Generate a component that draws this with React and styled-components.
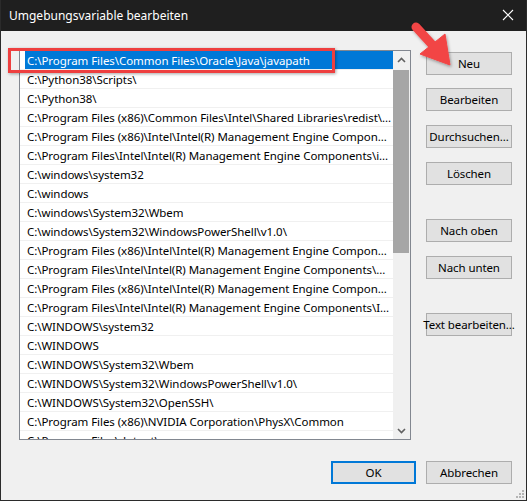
import React from 'react';
import styled, { createGlobalStyle } from 'styled-components';

const GlobalStyle = createGlobalStyle`
  html, body {
    margin: 0;
    padding: 0;
    background: #f0f0f0;
  }
  * { box-sizing: border-box; }
`;

const paths = [
  'C:\\Program Files\\Common Files\\Oracle\\Java\\javapath',
  'C:\\Python38\\Scripts\\',
  'C:\\Python38\\',
  'C:\\Program Files (x86)\\Common Files\\Intel\\Shared Libraries\\redist\\...',
  'C:\\Program Files (x86)\\Intel\\Intel(R) Management Engine Compon...',
  'C:\\Program Files\\Intel\\Intel(R) Management Engine Components\\i...',
  'C:\\windows\\system32',
  'C:\\windows',
  'C:\\windows\\System32\\Wbem',
  'C:\\windows\\System32\\WindowsPowerShell\\v1.0\\',
  'C:\\Program Files (x86)\\Intel\\Intel(R) Management Engine Compon...',
  'C:\\Program Files\\Intel\\Intel(R) Management Engine Components\\...',
  'C:\\Program Files (x86)\\Intel\\Intel(R) Management Engine Compon...',
  'C:\\Program Files\\Intel\\Intel(R) Management Engine Components\\I...',
  'C:\\WINDOWS\\system32',
  'C:\\WINDOWS',
  'C:\\WINDOWS\\System32\\Wbem',
  'C:\\WINDOWS\\System32\\WindowsPowerShell\\v1.0\\',
  'C:\\WINDOWS\\System32\\OpenSSH\\',
  'C:\\Program Files (x86)\\NVIDIA Corporation\\PhysX\\Common',
  'C:\\Program Files\\dotnet\\',
];

const sideButtons = [
  { label: 'Neu', top: 2 },
  { label: 'Bearbeiten', top: 13 },
  { label: 'Durchsuchen...', top: 14 },
  { label: 'Löschen', top: 14 },
  { label: 'Nach oben', top: 34 },
  { label: 'Nach unten', top: 14 },
  { label: 'Text bearbeiten...', top: 34 },
];

function App() {
  return (
    <>
      <GlobalStyle />
      <Window>
        <TitleBar>
          <Title>Umgebungsvariable bearbeiten</Title>
          <CloseIcon width="12" height="12" viewBox="0 0 12 12">
            <path d="M1 1 L11 11 M11 1 L1 11" stroke="#fff" strokeWidth="1.1" />
          </CloseIcon>
        </TitleBar>

        <Body>
          <Main>
            <ListBox>
              <Rows>
                {paths.map((p, i) => (
                  <Row key={i}>
                    <RowText selected={i === 0}>{p}</RowText>
                  </Row>
                ))}
              </Rows>
              <ScrollBar>
                <ScrollArrow>
                  <svg width="9" height="6" viewBox="0 0 9 6">
                    <path d="M1 5 L4.5 1.5 L8 5" stroke="#606060" strokeWidth="1.6" fill="none" />
                  </svg>
                </ScrollArrow>
                <Track>
                  <Thumb />
                </Track>
                <ScrollArrow>
                  <svg width="9" height="6" viewBox="0 0 9 6">
                    <path d="M1 1 L4.5 4.5 L8 1" stroke="#606060" strokeWidth="1.6" fill="none" />
                  </svg>
                </ScrollArrow>
              </ScrollBar>
            </ListBox>

            <SideButtons>
              {sideButtons.map((b) => (
                <Button key={b.label} top={b.top}>{b.label}</Button>
              ))}
            </SideButtons>
          </Main>

          <Footer>
            <Button primary wide={85}>OK</Button>
            <Button>Abbrechen</Button>
          </Footer>
        </Body>

        <Highlight />
        <Arrow width="60" height="60" viewBox="0 0 60 60">
          <defs>
            <filter id="sh" x="-30%" y="-30%" width="160%" height="160%">
              <feDropShadow dx="1" dy="1.5" stdDeviation="1.5" floodColor="#000" floodOpacity="0.35" />
            </filter>
          </defs>
          <g filter="url(#sh)" fill="#f24545" stroke="#f24545" strokeLinejoin="round">
            <line x1="7" y1="7" x2="28" y2="30" strokeWidth="9" strokeLinecap="round" />
            <polygon points="11,34 36,14 41,45" strokeWidth="1" />
          </g>
        </Arrow>
        <Grip width="9" height="9" viewBox="0 0 9 9">
          <g fill="#b4b4b4">
            <rect x="7" y="1" width="2" height="2" />
            <rect x="4" y="4" width="2" height="2" />
            <rect x="7" y="4" width="2" height="2" />
            <rect x="1" y="7" width="2" height="2" />
            <rect x="4" y="7" width="2" height="2" />
            <rect x="7" y="7" width="2" height="2" />
          </g>
        </Grip>
      </Window>
    </>
  );
}

export default App;

const font = `"Segoe UI", "Noto Sans", "Open Sans", sans-serif`;

const Window = styled.div`
  position: relative;
  width: 527px;
  height: 501px;
  display: flex;
  flex-direction: column;
  border: 1px solid #2b2b2b;
  border-top: none;
  background: #f0f0f0;
  font-family: ${font};
  font-size: 11.5px;
  color: #000;
  overflow: hidden;
`;

const TitleBar = styled.div`
  height: 31px;
  flex: none;
  background: #1f1f1f;
  display: flex;
  align-items: center;
  justify-content: space-between;
  padding: 0 13px 1px 9px;
  margin: 0 -1px;
`;

const Title = styled.div`
  color: #fff;
  font-size: 12px;
`;

const CloseIcon = styled.svg`
  display: block;
`;

const Body = styled.div`
  flex: 1;
  display: flex;
  flex-direction: column;
  padding: 19px 14px 0 18px;
`;

const Main = styled.div`
  display: flex;
  gap: 15px;
`;

const ListBox = styled.div`
  width: 392px;
  height: 390px;
  border: 1px solid #828790;
  background: #fff;
  display: flex;
  overflow: hidden;
`;

const Rows = styled.div`
  flex: 1;
  min-width: 0;
  overflow: hidden;
`;

const Row = styled.div`
  height: 19px;
  border-bottom: 1px solid #f0f0f0;
  padding-left: 5px;
  display: flex;
`;

const RowText = styled.div`
  flex: 1;
  min-width: 0;
  padding: 1px 0 0 2px;
  line-height: 18px;
  letter-spacing: -0.06px;
  white-space: nowrap;
  overflow: hidden;
  background: ${(p) => (p.selected ? '#0078d7' : 'transparent')};
  color: ${(p) => (p.selected ? '#fff' : '#000')};
`;

const ScrollBar = styled.div`
  width: 17px;
  flex: none;
  background: #f0f0f0;
  display: flex;
  flex-direction: column;
`;

const ScrollArrow = styled.div`
  height: 17px;
  flex: none;
  display: flex;
  align-items: center;
  justify-content: center;
`;

const Track = styled.div`
  flex: 1;
  padding: 2px 0 0;
`;

const Thumb = styled.div`
  height: 183px;
  margin: 0 1px 0 0;
  background: #a6a6a6;
`;

const SideButtons = styled.div`
  display: flex;
  flex-direction: column;
`;

const Button = styled.div`
  width: ${(p) => p.wide || 86}px;
  height: 23px;
  margin-top: ${(p) => p.top || 0}px;
  background: #e1e1e1;
  border: ${(p) => (p.primary ? '2px solid #0078d7' : '1px solid #adadad')};
  display: flex;
  align-items: center;
  justify-content: center;
  font-size: 11.5px;
  letter-spacing: -0.1px;
  white-space: nowrap;
`;

const Footer = styled.div`
  display: flex;
  justify-content: flex-end;
  gap: 10px;
  margin-top: 21px;
`;

const Highlight = styled.div`
  position: absolute;
  left: 7px;
  top: 48px;
  width: 327px;
  height: 25px;
  border: 3px solid #ee3f3f;
  box-shadow: 1px 1px 3px rgba(0, 0, 0, 0.35);
`;

const Arrow = styled.svg`
  position: absolute;
  left: 408px;
  top: 20px;
`;

const Grip = styled.svg`
  position: absolute;
  right: 2px;
  bottom: 2px;
`;
